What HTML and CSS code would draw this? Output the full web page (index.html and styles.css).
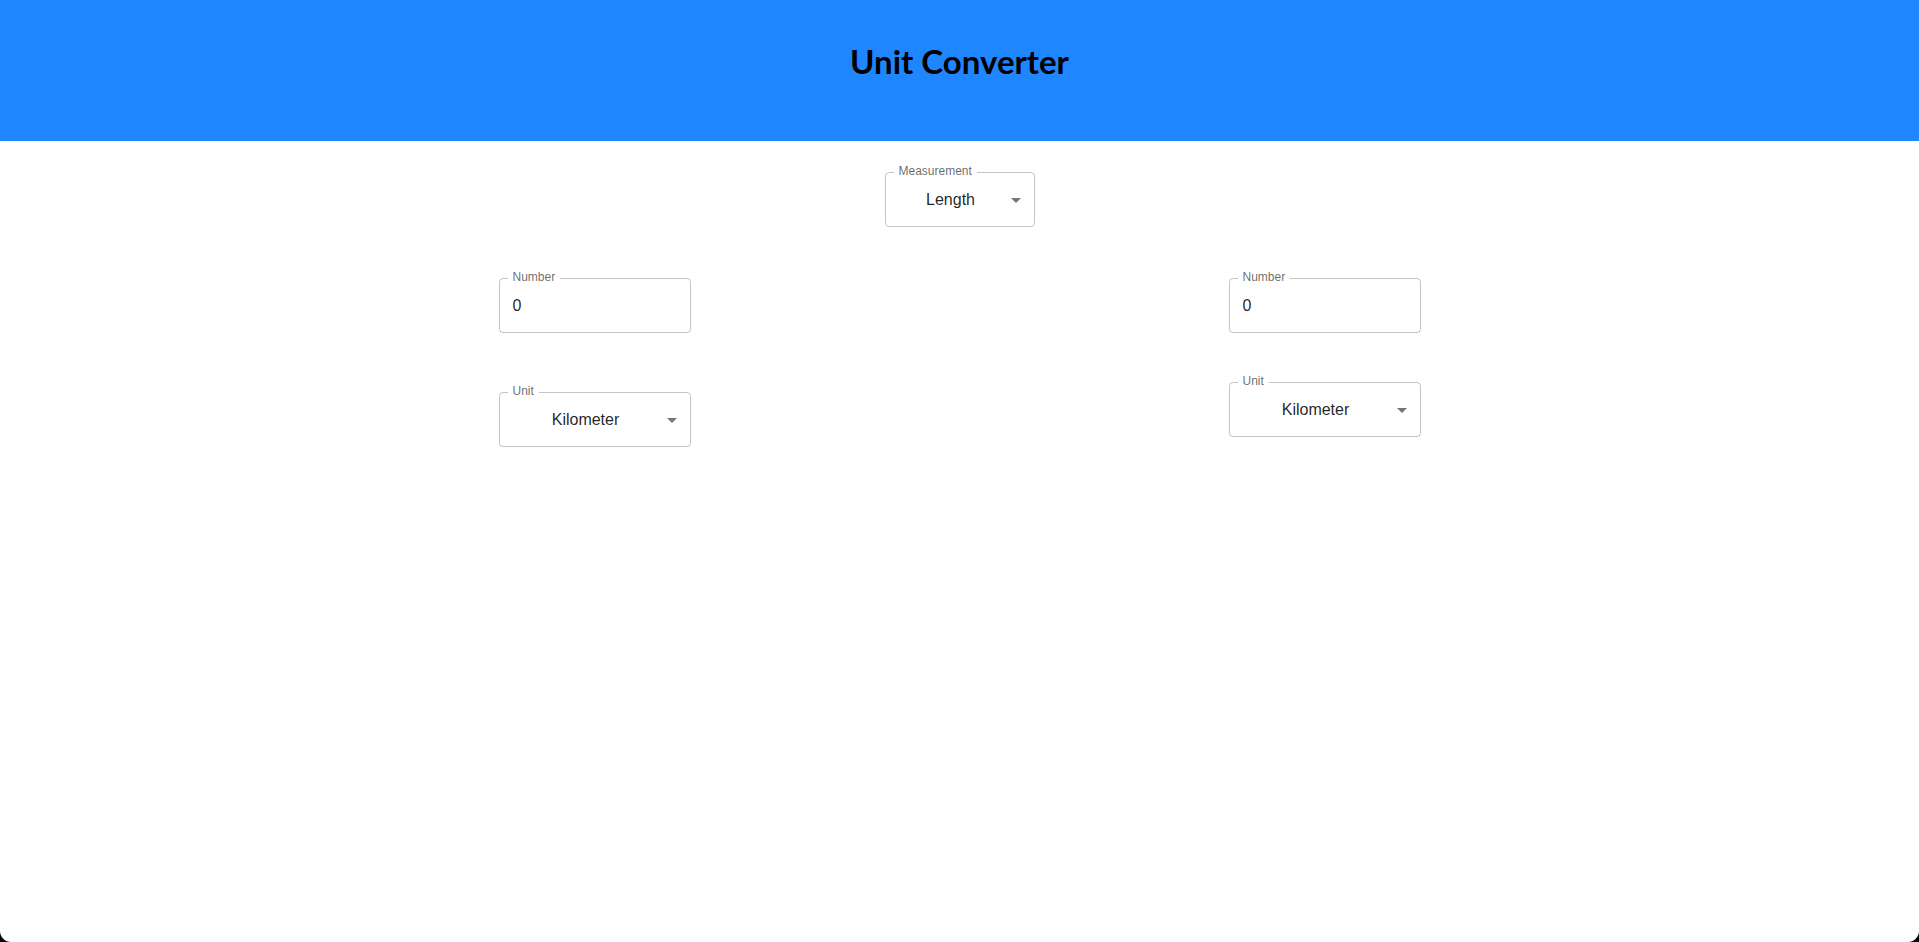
FILE: index.html
```html
<!DOCTYPE html>
<html lang="en">
<head>
<meta charset="utf-8">
<title>Unit Converter</title>
<link rel="stylesheet" href="styles.css">
</head>
<body>
<div class="app">
  <header class="header">
    <h1 class="title">Unit Converter</h1>
  </header>
  <main class="main">
    <div class="measure-row">
      <div class="field field--select field--measure">
        <div class="value">Length</div>
        <svg class="arrow" viewBox="0 0 24 24" width="24" height="24"><path d="M7 10l5 5 5-5z"/></svg>
        <fieldset class="outline"><legend>Measurement</legend></fieldset>
      </div>
    </div>
    <div class="columns">
      <div class="column column--left">
        <div class="field field--text">
          <div class="value">0</div>
          <fieldset class="outline"><legend>Number</legend></fieldset>
        </div>
        <div class="field field--select">
          <div class="value">Kilometer</div>
          <svg class="arrow" viewBox="0 0 24 24" width="24" height="24"><path d="M7 10l5 5 5-5z"/></svg>
          <fieldset class="outline"><legend>Unit</legend></fieldset>
        </div>
      </div>
      <div class="column column--right">
        <div class="field field--text">
          <div class="value">0</div>
          <fieldset class="outline"><legend>Number</legend></fieldset>
        </div>
        <div class="field field--select">
          <div class="value">Kilometer</div>
          <svg class="arrow" viewBox="0 0 24 24" width="24" height="24"><path d="M7 10l5 5 5-5z"/></svg>
          <fieldset class="outline"><legend>Unit</legend></fieldset>
        </div>
      </div>
    </div>
  </main>
</div>
</body>
</html>
```
FILE: styles.css
```css
html {
  background: #000;
}
body {
  margin: 0;
  font-family: "Liberation Sans", Helvetica, Arial, sans-serif;
}
.app {
  min-height: 942px;
  background: #fff;
  border-radius: 0 0 11px 11px;
  overflow: hidden;
}
.header {
  box-sizing: border-box;
  height: 141px;
  padding-top: 41px;
  background: #1f86ff;
}
.title {
  margin: 0;
  text-align: center;
  font-family: Lato, "Open Sans", sans-serif;
  font-weight: 700;
  font-size: 33px;
  line-height: 40px;
  color: #000;
}
.main {
  padding-top: 31px;
}
.measure-row {
  display: flex;
  justify-content: center;
}
.columns {
  display: flex;
  justify-content: center;
  gap: 538px;
  margin-top: 51px;
}
.column {
  display: flex;
  flex-direction: column;
  width: 192px;
}
.column--left {
  gap: 59px;
}
.column--right {
  gap: 49px;
}
.field {
  position: relative;
  box-sizing: border-box;
  height: 55px;
  border-radius: 4px;
  color: rgba(0, 0, 0, 0.87);
  font-size: 16px;
}
.field--measure {
  width: 150px;
}
.value {
  box-sizing: border-box;
  height: 55px;
  padding: 16px 14px;
  line-height: 23px;
  white-space: nowrap;
}
.field--select .value {
  padding-right: 32px;
  text-align: center;
}
.arrow {
  position: absolute;
  right: 7px;
  top: calc(50% - 12px);
  fill: rgba(0, 0, 0, 0.54);
}
.outline {
  position: absolute;
  top: -5px;
  left: 0;
  right: 0;
  bottom: 0;
  margin: 0;
  padding: 0 8px;
  border: 1px solid rgba(0, 0, 0, 0.23);
  border-radius: 4px;
  pointer-events: none;
  min-width: 0;
}
.outline legend {
  padding: 0 5px;
  height: 11px;
  font-size: 12px;
  line-height: 9px;
  color: rgba(0, 0, 0, 0.6);
  white-space: nowrap;
}
```
